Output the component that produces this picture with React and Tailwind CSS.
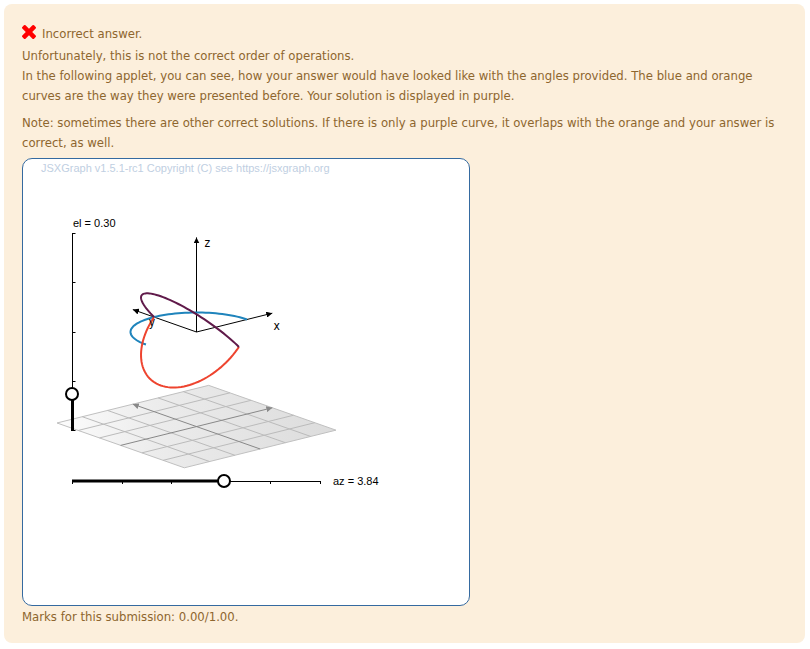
import { useState } from "react";

const SCALE = 33;
const ORIGIN = { x: 173.5, y: 173 };
const HALF = 3;
const RADIUS = 2;

// Parallel projection of a 3D point for the given camera angles.
function makeProjection(az, el) {
  return ([x, y, z]) => [
    ORIGIN.x + SCALE * (-x * Math.cos(az) + y * Math.sin(az)),
    ORIGIN.y +
      SCALE * (Math.sin(el) * (x * Math.sin(az) + y * Math.cos(az)) - z * Math.cos(el)),
  ];
}

function toPoints(points) {
  return points.map(([x, y]) => `${x.toFixed(2)},${y.toFixed(2)}`).join(" ");
}

// Half circle from vector u through vector v to -u.
function halfCircle(u, v) {
  return Array.from({ length: 61 }, (_, i) => {
    const t = (Math.PI * i) / 60;
    return u.map((c, k) => RADIUS * (c * Math.cos(t) + v[k] * Math.sin(t)));
  });
}

const D = Math.SQRT1_2;
const CURVES = [
  { color: "#1f84bc", points: halfCircle([1, 0, 0], [0, 1, 0]) },
  { color: "#ee442f", points: halfCircle([0, 1, 0], [-D, 0, -D]) },
  { color: "#601a4a", points: halfCircle([0, 1, 0], [-D, 0, D]) },
];

function Line({ from, to, ...rest }) {
  return <line x1={from[0]} y1={from[1]} x2={to[0]} y2={to[1]} {...rest} />;
}

function Arrowhead({ id, color }) {
  return (
    <marker id={id} viewBox="0 0 6 6" refX="6" refY="3" markerWidth="6" markerHeight="6" markerUnits="userSpaceOnUse" orient="auto">
      <path d="M0 0 6 3 0 6Z" fill={color} />
    </marker>
  );
}

const SLIDER =
  "absolute m-0 cursor-pointer appearance-none bg-transparent [&::-webkit-slider-runnable-track]:bg-transparent [&::-webkit-slider-thumb]:size-[14px] [&::-webkit-slider-thumb]:appearance-none [&::-webkit-slider-thumb]:rounded-full [&::-webkit-slider-thumb]:border-2 [&::-webkit-slider-thumb]:border-black [&::-webkit-slider-thumb]:bg-white";

function Board() {
  const [az, setAz] = useState(3.84);
  const [el, setEl] = useState(0.3);
  const project = makeProjection(az, el);

  const gridSteps = [-2, -1, 1, 2];
  const corners = [
    [-HALF, HALF, -HALF],
    [HALF, HALF, -HALF],
    [HALF, -HALF, -HALF],
    [-HALF, -HALF, -HALF],
  ];
  const xLabel = project([3.2, 0, 0]);
  const yLabel = project([0, 2.2, 0]);
  const zLabel = project([0, 0, 3]);
  const azX = 49 + (248 * az) / (2 * Math.PI);
  const elY = 272 - (198 * el) / (Math.PI / 2);

  return (
    <div className="relative size-[448px] overflow-hidden rounded-[10px] border border-[#356aa0] bg-white font-['Liberation_Sans',Arial,sans-serif] text-[11px]">
      <svg viewBox="0 0 446 446" className="block size-full" role="img" aria-label="3D view of the rotated curves">
        <defs>
          <Arrowhead id="axis-head" color="#000" />
          <Arrowhead id="plane-head" color="#888" />
          <linearGradient id="floor">
            <stop offset="0" stopColor="#fcfcfc" />
            <stop offset="0.35" stopColor="#ececec" />
            <stop offset="1" stopColor="#dcdcdc" />
          </linearGradient>
        </defs>

        <text x="18" y="13" fill="#bfcfe2">
          JSXGraph v1.5.1-rc1 Copyright (C) see https://jsxgraph.org
        </text>

        <polygon points={toPoints(corners.map(project))} fill="url(#floor)" stroke="#c0c0c0" />
        <g stroke="#bbb">
          {gridSteps.map((s) => (
            <g key={s}>
              <Line from={project([s, -HALF, -HALF])} to={project([s, HALF, -HALF])} />
              <Line from={project([-HALF, s, -HALF])} to={project([HALF, s, -HALF])} />
            </g>
          ))}
        </g>
        <g stroke="#888">
          <Line from={project([-HALF, 0, -HALF])} to={project([HALF, 0, -HALF])} markerEnd="url(#plane-head)" />
          <Line from={project([0, -HALF, -HALF])} to={project([0, HALF, -HALF])} markerEnd="url(#plane-head)" />
        </g>

        <g stroke="#000">
          {[[HALF, 0, 0], [0, HALF, 0], [0, 0, HALF]].map((end) => (
            <Line key={end.join()} from={project([0, 0, 0])} to={project(end)} markerEnd="url(#axis-head)" />
          ))}
        </g>

        {CURVES.map(({ color, points }) => (
          <polyline key={color} points={toPoints(points.map(project))} fill="none" stroke={color} strokeWidth="2" />
        ))}

        <g className="font-['DejaVu_Sans_Condensed','DejaVu_Sans',sans-serif] text-[12px]">
          <text x={zLabel[0] + 8} y={zLabel[1] + 10}>z</text>
          <text x={xLabel[0] - 4} y={xLabel[1] + 18}>x</text>
          <text x={yLabel[0] - 1} y={yLabel[1] + 10}>y</text>
        </g>

        <path
          d="M49.5 74V272M49.5 74.5h3M49.5 123.5h3M49.5 173.5h3M49.5 222.5h3M49.5 271.5h3M49 322.5H298M49.5 322v3M99.5 322v3M148.5 322v3M198.5 322v3M247.5 322v3M297.5 322v3"
          fill="none"
          stroke="#000"
        />
        <path d={`M49.5 ${elY}V272M49 322H${azX}`} fill="none" stroke="#000" strokeWidth="3" />
        <text x="50" y="68">el = {el.toFixed(2)}</text>
        <text x="310" y="326">az = {az.toFixed(2)}</text>
      </svg>
      <input
        type="range"
        aria-label="Elevation"
        min="0"
        max={Math.PI / 2}
        step="any"
        value={el}
        onChange={(e) => setEl(Number(e.target.value))}
        className={`${SLIDER} top-[68px] left-[42px] h-[212px] w-[14px] [direction:rtl] [writing-mode:vertical-lr]`}
      />
      <input
        type="range"
        aria-label="Azimuth"
        min="0"
        max={2 * Math.PI}
        step="any"
        value={az}
        onChange={(e) => setAz(Number(e.target.value))}
        className={`${SLIDER} top-[315px] left-[42px] h-[14px] w-[262px]`}
      />
    </div>
  );
}

function CrossIcon() {
  return (
    <svg viewBox="110 366 1188 1188" className="mb-1 size-[14px]" fill="#f00" role="img" aria-label="Incorrect">
      <path d="M1298 1322q0 40-28 68l-136 136q-28 28-68 28t-68-28l-294-294-294 294q-28 28-68 28t-68-28l-136-136q-28-28-28-68t28-68l294-294-294-294q-28-28-28-68t28-68l136-136q28-28 68-28t68 28l294 294 294-294q28-28 68-28t68 28l136 136q28 28 28 68t-28 68l-294 294 294 294q28 28 28 68z" />
    </svg>
  );
}

export default function App() {
  return (
    <main className="mt-1 mr-[5px] ml-1 rounded-lg bg-[#fcefdc] p-[18px] pb-4 font-['DejaVu_Sans_Condensed','Noto_Sans',sans-serif] text-[13px] leading-5 text-[#8e662e]">
      <div className="flex h-6 items-center gap-[6px]">
        <CrossIcon />
        <span>Incorrect answer.</span>
      </div>
      <p>Unfortunately, this is not the correct order of operations.</p>
      <p>
        In the following applet, you can see, how your answer would have looked like with the angles provided. The blue
        and orange curves are the way they were presented before. Your solution is displayed in purple.
      </p>
      <p className="mt-[7px] mb-[5px]">
        Note: sometimes there are other correct solutions. If there is only a purple curve, it overlaps with the orange
        and your answer is correct, as well.
      </p>
      <Board />
      <p className="mt-px">Marks for this submission: 0.00/1.00.</p>
    </main>
  );
}
